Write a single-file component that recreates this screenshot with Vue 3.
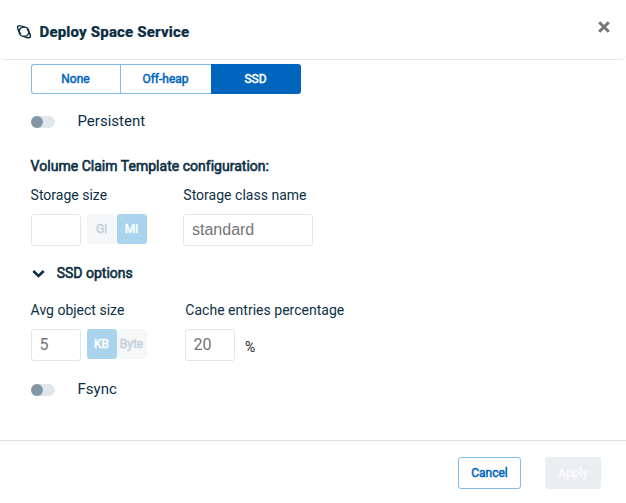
<script setup>
import { ref } from 'vue'

const storageTypes = ['None', 'Off-heap', 'SSD']
const storageType = ref('SSD')
const storageUnits = ['Gi', 'Mi']
const objectUnits = ['KB', 'Byte']
</script>

<template>
  <div class="dialog">
    <header class="header">
      <svg class="planet" width="16" height="16" viewBox="0 0 16 16" fill="none" stroke="#0d2f44" stroke-width="1.5" stroke-linecap="round" stroke-linejoin="round">
        <circle cx="8" cy="7.7" r="4.8" />
        <path d="M4.4 9.6C2.2 6.8 1 3.2 1.9 2.2C2.8 1.2 5.6 1.9 8 3.1M11.6 5.8C13.8 8.6 15 12.2 14.1 13.2C13.2 14.2 10.4 13.5 8 12.3" />
      </svg>
      <h1 class="title">Deploy Space Service</h1>
      <button class="close" aria-label="Close">
        <svg width="12" height="12" viewBox="0 0 12 12" stroke="#777" stroke-width="3"><path d="M1.2 1.2L10.8 10.8M10.8 1.2L1.2 10.8" /></svg>
      </button>
    </header>

    <main class="body">
      <div class="segments">
        <button v-for="t in storageTypes" :key="t" class="segment" :class="{ active: t === storageType }" @click="storageType = t">{{ t }}</button>
      </div>

      <div class="toggle-row persistent">
        <span class="switch"></span><span>Persistent</span>
      </div>

      <h2 class="heading">Volume Claim Template configuration:</h2>
      <div class="fields">
        <div class="field size">
          <label>Storage size</label>
          <div class="controls">
            <input class="input small" type="text" />
            <div class="units"><span v-for="u in storageUnits" :key="u" class="unit" :class="{ on: u === 'Mi' }">{{ u }}</span></div>
          </div>
        </div>
        <div class="field">
          <label class="aligned">Storage class name</label>
          <input class="input wide" type="text" placeholder="standard" />
        </div>
      </div>

      <div class="options">
        <svg width="13" height="9" viewBox="0 0 13 9" fill="none" stroke="#0d2f44" stroke-width="2.5"><path d="M1.3 2L6.5 7L11.7 2" /></svg>
        <h2>SSD options</h2>
      </div>
      <div class="fields second">
        <div class="field size">
          <label>Avg object size</label>
          <div class="controls">
            <input class="input small number" type="text" placeholder="5" />
            <div class="units"><span v-for="u in objectUnits" :key="u" class="unit" :class="{ on: u === 'KB' }">{{ u }}</span></div>
          </div>
        </div>
        <div class="field">
          <label class="aligned">Cache entries percentage</label>
          <div class="controls">
            <input class="input small number" type="text" placeholder="20" />
            <span class="percent">%</span>
          </div>
        </div>
      </div>

      <div class="toggle-row fsync">
        <span class="switch"></span><span>Fsync</span>
      </div>
    </main>

    <footer class="footer">
      <button class="btn cancel">Cancel</button>
      <button class="btn apply" disabled>Apply</button>
    </footer>
  </div>
</template>

<style>
body { margin: 0; background: #fff; }
</style>

<style scoped>
* { box-sizing: border-box; }
.dialog {
  height: 503px;
  display: flex;
  flex-direction: column;
  overflow: hidden;
  background: #fff;
  color: #0d2f44;
  font-family: Roboto, sans-serif;
  font-size: 14px;
}
button { font-family: inherit; margin: 0; }
h1, h2 { margin: 0; }
.header {
  height: 60px;
  flex: none;
  display: flex;
  align-items: center;
  padding: 4px 16.5px 0 16px;
  border-bottom: 1px solid #e4e6e8;
  border-radius: 0 0 5px 5px;
}
.title {
  margin-left: 7.5px;
  font-size: 15px;
  line-height: 20px;
  font-weight: 800;
  letter-spacing: 0.17px;
  -webkit-text-stroke: 0.2px;
}
.close {
  display: flex;
  margin: 0 0 9px auto;
  padding: 0;
  border: 0;
  background: none;
}
.body { flex: 1; padding: 4px 31px 0; }
.segments {
  display: grid;
  grid-template-columns: 90px 90px 90px;
  width: 270px;
  height: 30px;
}
.segment {
  padding: 0 1px 1px 0;
  border: 1px solid #80bde9;
  background: none;
  color: #0065bd;
  font-size: 12px;
  -webkit-text-stroke: 0.5px;
}
.segment:nth-child(1) { padding-right: 2px; border-right: 0; border-radius: 3px 0 0 3px; }
.segment:nth-child(2) { margin-left: -1px; border-right: 0; }
.segment.active {
  border: 0;
  border-radius: 0 3px 3px 0;
  background: #0065bd;
  color: #fff;
}
.toggle-row {
  display: flex;
  align-items: center;
  gap: 22.5px;
  height: 20px;
  font-size: 15px;
}
.persistent { margin-top: 17px; }
.switch {
  width: 24px;
  height: 12px;
  margin-top: 2px;
  border-radius: 6px;
  background: #e1e6ea;
}
.switch::before {
  content: '';
  display: block;
  width: 12px;
  height: 12px;
  border-radius: 50%;
  background: #8396a5;
}
.heading {
  margin: 25px 0 0 -0.4px;
  font-size: 14px;
  line-height: 20px;
  font-weight: 400;
  letter-spacing: 0.02px;
  -webkit-text-stroke: 0.6px;
}
.fields { display: flex; margin-top: 9px; }
.field.size { width: 152px; }
.second .field.size { width: 154px; }
.field label {
  display: block;
  line-height: 20px;
  margin: 0 0 9px -0.4px;
}
.field .aligned { margin-left: 0.3px; letter-spacing: 0.02px; }
.controls { display: flex; }
.input {
  display: block;
  height: 32px;
  padding: 0 8px;
  border: 1px solid #e1e6ea;
  border-radius: 3px;
  background: #fff;
  font: 16px "Liberation Sans", sans-serif;
  outline: none;
}
.input::placeholder { color: #757575; opacity: 1; }
.small { width: 50px; }
.wide { width: 130px; }
.number { padding: 0 7.5px 2px; font-family: Roboto, sans-serif; }
.units { display: flex; margin-left: 6px; }
.unit {
  width: 30px;
  height: 30px;
  padding-right: 1px;
  border-radius: 3px;
  background: #f5f7f8;
  color: #c5d1da;
  font-size: 12px;
  line-height: 30px;
  text-align: center;
  -webkit-text-stroke: 0.5px;
}
.unit.on { background: #aad4ed; color: #fff; }
.percent { margin: 9px 0 0 10px; line-height: 18px; color: #222; }
.options {
  display: flex;
  align-items: center;
  gap: 11.7px;
  height: 20px;
  margin-top: 17px;
  padding-left: 1px;
}
.options h2 { font-size: 14px; font-weight: 400; -webkit-text-stroke: 0.6px; }
.second { margin-top: 17px; }
.fsync { margin-top: 18px; }
.footer {
  height: 63px;
  flex: none;
  display: flex;
  justify-content: flex-end;
  gap: 24px;
  padding: 16px 25px 0;
  border-top: 1px solid #dedfe0;
}
.btn {
  height: 32px;
  padding: 0;
  border-radius: 3px;
  font-size: 12px;
  -webkit-text-stroke: 0.5px;
}
.cancel { width: 63px; border: 1px solid #80bde9; background: #fff; color: #0065bd; }
.apply { width: 56px; border: 0; background: #ebeef1; color: #fafafa; }
</style>
